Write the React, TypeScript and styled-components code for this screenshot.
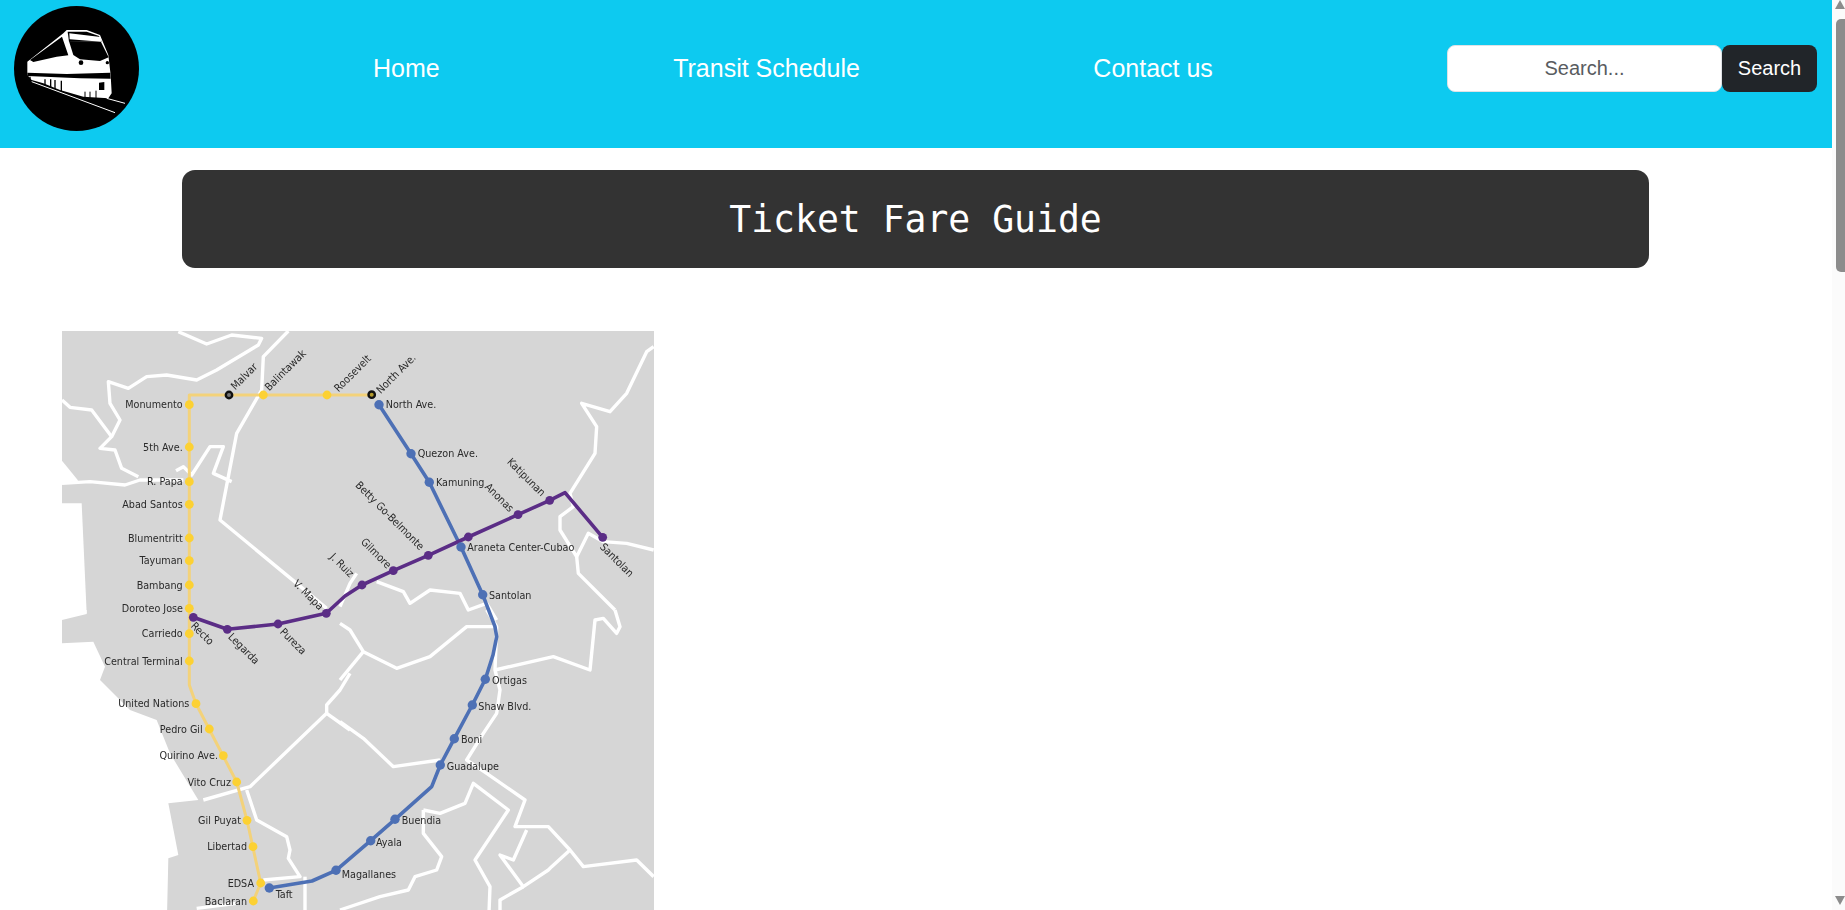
import React from 'react';
import styled, { createGlobalStyle } from 'styled-components';

const GlobalStyle = createGlobalStyle`
  body {
    margin: 0;
    background: #fff;
    font-family: 'Liberation Sans', Arial, sans-serif;
  }
`;

const Page = styled.div`
  min-height: 3150px;
  margin-right: 13px;
`;

const ScrollBar = styled.div`
  position: fixed;
  top: 0;
  right: 0;
  bottom: 0;
  display: flex;
  flex-direction: column;
  align-items: flex-end;
  width: 13px;
  background: #fbfbfb;
`;

const ScrollArrow = styled.div<{ $down?: boolean }>`
  flex: none;
  width: 0;
  height: 0;
  margin: ${({ $down }) => ($down ? 'auto 0 5px' : '0 0 10px')};
  border-left: 5px solid transparent;
  border-right: 5px solid transparent;
  border-top: ${({ $down }) => ($down ? '9px solid #8c8c8c' : '0')};
  border-bottom: ${({ $down }) => ($down ? '0' : '9px solid #8c8c8c')};
`;

const ScrollThumb = styled.div`
  flex: none;
  width: 9px;
  height: 253px;
  border-radius: 5px 0 0 5px;
  background: #8c8c8c;
`;

const Header = styled.header`
  display: flex;
  align-items: center;
  height: 148px;
  padding: 6px 15px 17px 14px;
  box-sizing: border-box;
  background: #0dcaf0;
`;

const Logo = styled.svg`
  display: block;
  flex: none;
  width: 125px;
  height: 125px;
`;

const Nav = styled.nav`
  display: flex;
  gap: 233.5px;
  margin-left: 234px;
`;

const NavLink = styled.a`
  color: #fff;
  font-size: 25px;
  line-height: 29px;
  text-decoration: none;
`;

const SearchForm = styled.form`
  display: flex;
  margin-left: auto;
`;

const SearchInput = styled.input`
  width: 275px;
  height: 47px;
  padding: 0 12px;
  box-sizing: border-box;
  border: 1px solid #dee2e6;
  border-radius: 8px;
  background: #fff;
  color: #212529;
  font-family: inherit;
  font-size: 20px;
  text-align: center;

  &::placeholder {
    color: #595c5f;
    opacity: 1;
  }
`;

const SearchButton = styled.button`
  width: 95px;
  height: 47px;
  padding: 0;
  border: 0;
  border-radius: 8px;
  background: #212529;
  color: #fff;
  font-family: inherit;
  font-size: 20px;
`;

const Title = styled.h1`
  width: 1467px;
  height: 98px;
  margin: 22px 0 0 182px;
  border-radius: 13px;
  background: #333;
  color: #fff;
  font-family: 'DejaVu Sans Mono', 'Liberation Mono', monospace;
  font-size: 36.4px;
  font-weight: 400;
  line-height: 100px;
  text-align: center;
`;

const MapFigure = styled.figure`
  width: 592px;
  margin: 63px 0 0 62px;
`;

const MapSvg = styled.svg`
  display: block;
  width: 592px;
  height: 640px;
  filter: blur(0.45px);
`;

const Road = styled.polyline`
  fill: none;
  stroke: #fff;
  stroke-width: 3.4;
  stroke-linejoin: round;
`;

const Line = styled.polyline<{ $color: string; $width: number }>`
  fill: none;
  stroke: ${({ $color }) => $color};
  stroke-width: ${({ $width }) => $width};
  stroke-linejoin: round;
`;

const Label = styled.text`
  fill: #2a2a2a;
  font-family: 'DejaVu Sans Condensed', 'DejaVu Sans', sans-serif;
  font-size: 10.7px;
  dominant-baseline: central;
`;

type Pt = [number, number];

// the map was read off in four crops, so points are kept per crop origin
const at = (ox: number, oy: number, pts: Pt[]) =>
  pts.map(([x, y]) => `${ox + x / 3},${oy + y / 3}`).join(' ');

const sea = [
  at(50, 320, [[36, 422], [85, 482], [36, 490]]),
  at(50, 320, [[36, 550], [95, 550], [110, 880], [36, 895]]),
  at(50, 610, [[36, 100], [130, 95], [165, 170], [150, 210], [240, 300], [320, 330], [360, 430], [445, 570], [355, 580], [385, 735], [355, 745], [350, 960], [36, 960]]),
  at(50, 610, [[36, 30], [110, 12], [110, 0], [36, 0]]),
];

const roads = [
  at(50, 320, [[385, 35], [470, 72], [545, 45], [635, 55], [625, 75], [500, 150], [440, 180], [350, 165], [290, 170], [235, 205], [175, 185], [180, 250], [210, 300], [185, 350], [150, 385], [195, 390], [215, 445], [265, 470]]),
  at(50, 320, [[36, 240], [60, 262], [125, 270], [185, 350]]),
  at(50, 320, [[36, 490], [120, 485], [225, 495], [270, 480], [400, 480]]),
  at(50, 320, [[715, 33], [640, 110], [635, 210], [560, 340], [510, 600], [740, 790], [830, 865]]),
  at(50, 320, [[545, 485], [490, 460], [520, 380], [480, 380], [425, 465], [400, 440], [378, 452]]),
  at(340, 320, [[941, 80], [920, 95], [860, 220], [810, 275], [725, 250], [770, 320], [765, 400], [690, 520], [700, 560], [660, 590], [660, 630], [710, 710], [745, 640], [790, 665], [860, 670], [941, 690]]),
  at(340, 320, [[710, 710], [715, 760], [825, 870]]),
  at(340, 320, [[0, 860], [30, 790], [50, 760]]),
  at(340, 320, [[110, 785], [190, 815], [210, 850], [270, 810], [360, 820], [385, 870], [440, 850], [470, 900]]),
  at(340, 610, [[465, 180], [640, 140], [750, 180], [765, 30], [790, 25], [830, 70], [840, 50], [825, 0]]),
  at(340, 610, [[440, 0], [470, 50], [465, 180], [480, 240], [470, 310], [430, 370], [380, 450], [440, 490], [555, 570], [525, 650], [625, 650], [690, 720], [730, 770], [890, 750], [941, 800]]),
  at(340, 610, [[0, 40], [30, 60], [70, 125], [170, 175], [270, 140], [380, 50], [460, 50]]),
  at(340, 610, [[70, 125], [0, 210]]),
  at(340, 610, [[0, 335], [70, 385], [160, 470], [300, 450]]),
  at(340, 610, [[250, 600], [300, 610], [375, 580], [400, 520], [505, 600], [405, 750], [450, 830], [445, 960]]),
  at(340, 610, [[250, 600], [250, 670], [305, 740], [290, 780], [225, 800], [205, 840], [120, 860], [0, 900]]),
  at(340, 610, [[560, 660], [520, 750], [480, 735], [550, 830], [625, 780], [635, 770], [690, 720]]),
  at(340, 610, [[550, 830], [480, 870], [480, 960]]),
  at(50, 610, [[830, 310], [600, 530], [460, 570]]),
  at(50, 610, [[830, 310], [900, 360]]),
  at(50, 610, [[830, 310], [830, 285], [870, 240], [900, 190]]),
  at(50, 610, [[590, 540], [620, 630], [710, 680], [720, 720], [715, 745], [750, 800], [640, 810]]),
  at(50, 610, [[765, 800], [765, 960]]),
  at(50, 610, [[440, 895], [560, 880]]),
];

const yellowStops: Pt[] = [
  [189.3, 404.7], [189.3, 447], [189.3, 481.7], [189.3, 504.3], [189.3, 538], [189.3, 560.7], [189.3, 585], [189.3, 608.3],
  [189.3, 633.7], [189.3, 661], [196, 703.7], [209.3, 729], [223.3, 755.7], [236.7, 782], [247, 820.3], [253, 846.7], [260.7, 883], [253.3, 901],
  [263.3, 395], [327, 395],
];

const blueStops: Pt[] = [
  [379, 404.7], [411, 453.7], [429.3, 482.3], [461, 547], [482.7, 594.7], [485.3, 679.3], [472.3, 705], [454.3, 738.7],
  [440.3, 765], [395, 819.3], [370.7, 840.7], [336, 870.3], [269.3, 888],
];

const purpleStops: Pt[] = [
  [193.3, 617.3], [227.3, 629.3], [278, 624], [326.3, 613.3], [362, 585], [393.3, 570.7], [428.3, 555.3], [468.3, 537],
  [518, 514.7], [549.7, 500.3], [602.7, 537.3],
];

const endLabels: [string, number, number][] = [
  ['Monumento', 182.7, 404.7], ['5th Ave.', 182.7, 447], ['R. Papa', 182.7, 481.7], ['Abad Santos', 182.7, 504.3],
  ['Blumentritt', 182.7, 538], ['Tayuman', 182.7, 560.7], ['Bambang', 182.7, 585], ['Doroteo Jose', 183, 608.3],
  ['Carriedo', 182.7, 633.7], ['Central Terminal', 182.7, 661], ['United Nations', 189.3, 703.7], ['Pedro Gil', 202.7, 729],
  ['Quirino Ave.', 218, 755.7], ['Vito Cruz', 231, 782], ['Gil Puyat', 241, 820.3], ['Libertad', 247, 846.7],
  ['EDSA', 254, 883], ['Baclaran', 247, 901],
];

const startLabels: [string, number, number][] = [
  ['North Ave.', 385.7, 404.7], ['Quezon Ave.', 417.7, 453.7], ['Kamuning', 436, 482], ['Araneta Center-Cubao', 467.3, 547],
  ['Santolan', 489, 595], ['Ortigas', 492, 680], ['Shaw Blvd.', 478.3, 706], ['Boni', 461, 739], ['Guadalupe', 446.7, 766],
  ['Buendia', 401.7, 820], ['Ayala', 376, 842], ['Magallanes', 341.7, 874], ['Taft', 275.7, 894],
];

const slantedLabels: [string, number, number, number][] = [
  ['Malvar', 232.7, 388, -45], ['Balintawak', 266.7, 389, -45], ['Roosevelt', 336, 390, -45], ['North Ave.', 378.3, 391.7, -45],
  ['Recto', 192.7, 624, 45], ['Legarda', 230, 635, 45], ['Pureza', 281.7, 630, 45], ['Santolan', 601.7, 545, 45],
  ['V. Mapa', 295, 581.7, 45], ['J. Ruiz', 331.7, 555, 45], ['Gilmore', 362.7, 540, 45], ['Betty Go-Belmonte', 357.3, 483.3, 45],
  ['Anonas', 486.7, 485, 45], ['Katipunan', 509, 460, 45],
];

const TrainLogo = () => (
  <Logo viewBox="42 18 375 375">
    <circle cx="229.5" cy="205.5" r="187.5" fill="#000" />
    <path d="M82 185 190 100 200 90 260 90 300 105 325 165 332 225 335 280 325 295 250 290 180 270 130 250 95 240 82 225Z" fill="#fff" />
    <path d="M203 95 260 95 297 108 305 125 207 125Z" fill="#000" />
    <path d="M208 100 302 111 304 125 209 118Z" fill="#fff" />
    <path d="M207 124 303 126 326 172 300 183 240 178 220 165Z" fill="#000" />
    <path d="M90 180 186 110 205 166 170 170 100 186Z" fill="#000" />
    <path d="M82 218 200 222 331 218 332 236 240 235 82 228Z" fill="#000" />
    <circle cx="243" cy="188" r="7" fill="#000" />
    <circle cx="322" cy="188" r="5" fill="#000" />
    <path d="M297 248 313 246 313 270 297 270Z" fill="#000" />
    <path d="M255 275V292M270 275V294M288 272V296" stroke="#000" strokeWidth="3" />
    <path d="M90 230V246M135 238V262M152 238V268M165 240V274M184 242V280" stroke="#000" strokeWidth="4" />
    <path d="M95 245 345 338M320 295 375 310" stroke="#fff" strokeWidth="3" />
  </Logo>
);

const RailMap = () => (
  <MapSvg viewBox="62 331 592 640">
    <rect x="62" y="331" width="592" height="640" fill="#d6d6d6" />
    {sea.map((points, i) => <polygon key={i} points={points} fill="#fff" />)}
    {roads.map((points, i) => <Road key={i} points={points} />)}

    <Line $color="#f3d27a" $width={3} points="253.3,901 260.7,883 247,820.3 236.7,782 196,703.7 189.3,685 189.3,395 371.7,395" />
    <Line $color="#4d70b5" $width={3.6} points="379,404.7 411,453.7 429.3,482.3 461,547 482.7,594.7 495,626.7 496.7,636.7 493,655 485.3,679.3 472.3,705 454.3,738.7 440.3,765 431.7,786.7 395,819.3 370.7,840.7 336,870.3 312,881 269.3,888" />
    <Line $color="#5b2d86" $width={3.6} points="193.3,617.3 227.3,629.3 278,624 326.3,613.3 345,596 362,585 393.3,570.7 428.3,555.3 468.3,537 518,514.7 549.7,500.3 565,492.7 602.7,537.3" />

    {yellowStops.map(([x, y]) => <circle key={`${x}-${y}`} cx={x} cy={y} r="4.4" fill="#fcd133" />)}
    {blueStops.map(([x, y]) => <circle key={`${x}-${y}`} cx={x} cy={y} r="4.7" fill="#4d70b5" />)}
    {purpleStops.map(([x, y]) => <circle key={`${x}-${y}`} cx={x} cy={y} r="4.4" fill="#5b2d86" />)}
    <circle cx="229" cy="395" r="3.2" fill="#777" stroke="#111" strokeWidth="2.4" />
    <circle cx="371.7" cy="394.7" r="3.2" fill="#b39a2c" stroke="#111" strokeWidth="2.4" />

    {endLabels.map(([name, x, y]) => <Label key={name} x={x} y={y} textAnchor="end">{name}</Label>)}
    {startLabels.map(([name, x, y]) => <Label key={`${name}-${y}`} x={x} y={y}>{name}</Label>)}
    {slantedLabels.map(([name, x, y, turn]) => (
      <Label key={`${name}-${x}`} x={x} y={y} transform={`rotate(${turn} ${x} ${y})`}>{name}</Label>
    ))}
  </MapSvg>
);

export default function App() {
  return (
    <Page>
      <GlobalStyle />
      <Header>
        <TrainLogo />
        <Nav>
          <NavLink href="#">Home</NavLink>
          <NavLink href="#">Transit Schedule</NavLink>
          <NavLink href="#">Contact us</NavLink>
        </Nav>
        <SearchForm onSubmit={(e) => e.preventDefault()}>
          <SearchInput placeholder="Search..." />
          <SearchButton>Search</SearchButton>
        </SearchForm>
      </Header>
      <Title>Ticket Fare Guide</Title>
      <MapFigure>
        <RailMap />
      </MapFigure>
      <ScrollBar>
        <ScrollArrow />
        <ScrollThumb />
        <ScrollArrow $down />
      </ScrollBar>
    </Page>
  );
}
